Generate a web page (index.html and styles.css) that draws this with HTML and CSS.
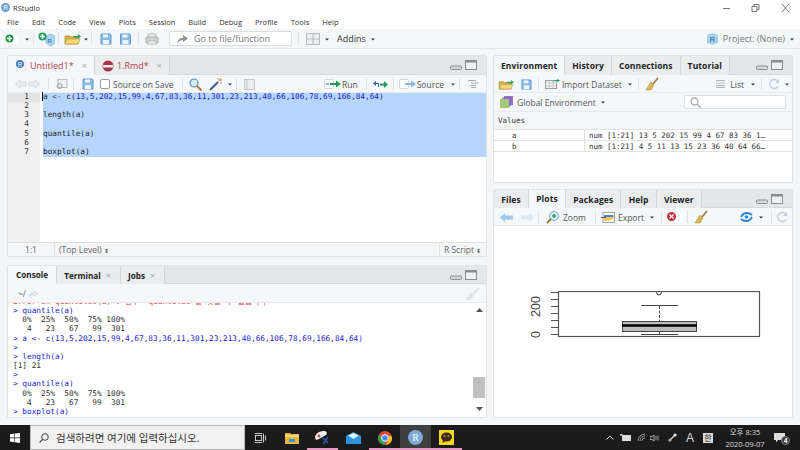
FILE: index.html
```html
<!DOCTYPE html>
<html lang="en">
  <head>
    <meta charset="UTF-8"/>
    <title>RStudio</title>
    <link rel="stylesheet" href="styles.css">
  </head>
  <body>
    <svg class="defs" width="0" height="0">
      <defs>
        <symbol id="floppy" viewBox="0 0 12 12"><path d="M1 1h9l1 1v9H1z" fill="#8bbbe6" stroke="#5f9bd0"/><rect x="3" y="1.500" width="5" height="3" fill="#eef5fb"/><rect x="3" y="7" width="6" height="4" fill="#eef5fb"/></symbol>
        <symbol id="folder" viewBox="0 0 18 12"><path d="M1 3h5l1 1h7v7H1z" fill="#dcb44c" stroke="#a8842c" stroke-width=".7"/><path d="M1 11l2-5h13l-2 5z" fill="#f3d67e" stroke="#b8923a" stroke-width=".6"/><path d="M9 3h5V1l3 2.500L14 6V4.500H10z" fill="#2aa05a"/></symbol>
        <symbol id="broom" viewBox="0 0 14 14"><path d="M13 1L8 7" stroke="#a8742c" stroke-width="1.600"/><path d="M6 5l3 3-3 5-5 0z" fill="#dcb45c" stroke="#a8842c" stroke-width=".5"/></symbol>
        <symbol id="refresh" viewBox="0 0 12 12"><path d="M10 3.500A4.500 4.500 0 1 0 10 8.500" fill="none" stroke="#c3cede" stroke-width="1.400"/><path d="M7 5h4V1z" fill="#c3cede"/></symbol>
        <symbol id="winmin" viewBox="0 0 28 10"><rect x=".5" y="6" width="11" height="3.500" rx="1" fill="#d6d8da" stroke="#8a8d90"/><rect x="15.500" y=".5" width="11" height="9" fill="#eef0f1" stroke="#8a8d90"/><rect x="15.500" y=".5" width="11" height="2" fill="#8a8d90"/></symbol>
        <symbol id="caret" viewBox="0 0 6 4"><path d="M0 .5h6L3 3.500z" fill="#333"/></symbol>
      </defs>
    </svg>

    <div class="app">
      <div class="titleBar">
        <svg class="rLogo" width="9" height="9" viewBox="0 0 9 9"><circle cx="4.500" cy="4.500" r="4.500" fill="#6d9ed3"/><text x="4.500" y="7" text-anchor="middle" font-size="6.500" fill="#fff" font-family="Liberation Sans">R</text></svg>
        <span class="titleBar_text">RStudio</span>
        <span class="spacer"></span>
        <svg class="winButtons" width="67" height="10" viewBox="0 0 67 10"><path d="M0 5.500h7" stroke="#777"/><path d="M29 3.500h5v5h-5zM31 3.500V1.500h5v5h-2" fill="none" stroke="#777"/><path d="M59 1l7 8M66 1l-7 8" stroke="#777"/></svg>
      </div>

      <div class="menuBar">
        <span>File</span><span>Edit</span><span>Code</span><span>View</span><span>Plots</span><span>Session</span><span>Build</span><span>Debug</span><span>Profile</span><span>Tools</span><span>Help</span>
      </div>

      <div class="mainToolbar">
        <svg width="14" height="10" viewBox="0 0 14 10"><rect x="5" y="1" width="8" height="9" fill="#fff"/><circle cx="4.500" cy="4.500" r="4" fill="#1f9d55"/><path d="M4.500 2v5M2 4.500h5" stroke="#fff" stroke-width="1.500"/></svg>
        <svg class="caretIcon ml6" width="4" height="3"><use href="#caret"/></svg>
        <i class="sep ml4"></i>
        <svg class="ml4" width="17" height="14" viewBox="0 0 17 14"><path d="M8 4l5-2 4 2v7l-4 3-5-3z" fill="#a9d4ec" stroke="#6fa8cc" stroke-width=".6"/><circle cx="4.500" cy="4.500" r="4" fill="#1f9d55"/><path d="M4.500 2v5M2 4.500h5" stroke="#fff" stroke-width="1.500"/><text x="9.500" y="11" font-size="6" fill="#2a62a8" font-family="Liberation Sans">R</text></svg>
        <i class="sep ml3"></i>
        <svg class="ml5" width="18" height="12"><use href="#folder"/></svg>
        <svg class="caretIcon ml2" width="4" height="3"><use href="#caret"/></svg>
        <i class="sep ml3"></i>
        <svg class="ml8" width="12" height="12"><use href="#floppy"/></svg>
        <svg class="ml7" width="13" height="12"><use href="#floppy"/></svg>
        <i class="sep ml6"></i>
        <svg class="ml6" width="14" height="12" viewBox="0 0 14 12"><rect x="3" y="1" width="8" height="4" fill="#eee" stroke="#b5b5b5"/><rect x="1" y="4" width="12" height="6" rx="1" fill="#d4d4d4" stroke="#aaa"/><rect x="3" y="8" width="8" height="3" fill="#f4f4f4" stroke="#bbb"/></svg>
        <div class="goToFile ml10">
          <svg width="11" height="9" viewBox="0 0 11 9"><path d="M0 9c1-4 3-5 6-5V1l5 3.500L6 8V6C4 6 2 7 0 9z" fill="#8b9198"/></svg>
          <span>Go to file/function</span>
        </div>
        <i class="sep ml6"></i>
        <svg class="ml7" width="14" height="12" viewBox="0 0 14 12"><rect x=".5" y=".5" width="13" height="11" fill="#eceef0" stroke="#b8bcc0"/><path d="M.5 6h13M7 .5v11" stroke="#b8bcc0"/></svg>
        <svg class="caretIcon ml5" width="4" height="3"><use href="#caret"/></svg>
        <span class="addins ml8">Addins</span>
        <svg class="caretIcon ml5" width="4" height="3"><use href="#caret"/></svg>
        <span class="spacer"></span>
        <svg width="13" height="12" viewBox="0 0 13 12"><path d="M1 2l5.500-2L12 2v8l-5.500 2L1 10z" fill="#a5d3ec"/><text x="6.500" y="9" text-anchor="middle" font-size="7.500" fill="#2a62a8" font-family="Liberation Sans">R</text></svg>
        <span class="project ml4">Project: (None)</span>
        <svg class="caretIcon ml5" width="4" height="3"><use href="#caret"/></svg>
      </div>

      <div class="workspace">
        <div class="column">
          <section class="pane sourcePane">
            <div class="tabBar">
              <div class="tab tab_active tab_source">
                <svg width="12" height="12" viewBox="0 0 12 12"><path d="M2 0h8v12H2z" fill="#fff" stroke="#c8ccd0" stroke-width=".5"/><circle cx="5" cy="5" r="4" fill="#4a78b8"/><text x="5" y="7.500" text-anchor="middle" font-size="6.500" fill="#fff" font-family="Liberation Sans">R</text></svg>
                <span class="unsaved">Untitled1*</span><span class="tabClose">×</span>
              </div>
              <div class="tab tab_source">
                <svg width="12" height="12" viewBox="0 0 12 12"><circle cx="6" cy="6" r="5.500" fill="#a8324a"/><rect x="1" y="5" width="10" height="2.500" fill="#eee"/></svg>
                <span class="unsaved">1.Rmd*</span><span class="tabClose">×</span>
              </div>
              <span class="spacer"></span>
              <svg class="paneButtons" width="28" height="10"><use href="#winmin"/></svg>
            </div>
            <div class="toolbar toolbar_source">
              <svg class="ml7" width="25" height="10" viewBox="0 0 25 10"><path d="M5 1v2h6v4H5v2L.5 5zM20 1v2h-6v4h6v2l4.500-4z" fill="#eceef0" stroke="#c8ccd0" stroke-width=".7"/></svg>
              <i class="sep ml8"></i>
              <svg class="ml6" width="13" height="11" viewBox="0 0 13 11"><rect x="3" y=".5" width="9" height="8" fill="#eef1f3" stroke="#b8bcc0"/><circle cx="4.500" cy="7" r="2.500" fill="none" stroke="#999"/></svg>
              <i class="sep ml5"></i>
              <svg class="ml8" width="12" height="12"><use href="#floppy"/></svg>
              <span class="checkBox ml6"></span>
              <span class="toolLabel ml3">Source on Save</span>
              <i class="sep ml9"></i>
              <svg class="ml6" width="13" height="13" viewBox="0 0 13 13"><circle cx="5" cy="5" r="4" fill="#d8ecf8" stroke="#5a8cb8" stroke-width="1.200"/><path d="M8 8l4.500 4.500" stroke="#b08030" stroke-width="2"/></svg>
              <svg class="ml7" width="14" height="14" viewBox="0 0 14 14"><path d="M1 13l8-8" stroke="#3d5f88" stroke-width="2"/><path d="M11 1v3M9 3h4M13 6h-2M8 1l1 1" stroke="#e08a3c"/></svg>
              <svg class="caretIcon ml5" width="4" height="3"><use href="#caret"/></svg>
              <i class="sep ml4"></i>
              <svg class="ml7" width="11" height="11" viewBox="0 0 11 11"><rect x=".5" y=".5" width="10" height="10" fill="#eceef0" stroke="#c4c8cc"/><path d="M3 .5v10" stroke="#c4c8cc"/></svg>
              <span class="spacer"></span>
              <svg width="17" height="10" viewBox="0 0 17 10"><rect x=".5" y=".5" width="9" height="9" rx="1" fill="#fff" stroke="#d4d8dc"/><path d="M2 5h3" stroke="#8ab8e0" stroke-width="2"/><path d="M6 4h6V1.500L17 5l-5 3.500V6H6z" fill="#1f9d55"/></svg>
              <span class="toolLabel ml1">Run</span>
              <i class="sep ml8"></i>
              <svg class="ml6" width="15" height="9" viewBox="0 0 15 9"><rect width="7" height="9" fill="#fff"/><path d="M5 3H3V1L0 3.500 3 6V4h2v3h1V3z" fill="#2a62a8"/><path d="M7 3.500h4V1l4 3.500L11 8V5.500H7z" fill="#1f9d55"/></svg>
              <i class="sep ml5"></i>
              <svg class="ml5" width="17" height="10" viewBox="0 0 17 10"><rect x=".5" y=".5" width="9" height="9" rx="1" fill="#fff" stroke="#d4d8dc"/><path d="M6 4h6V1.500L17 5l-5 3.500V6H6z" fill="#82b6e4"/></svg>
              <span class="toolLabel ml1">Source</span>
              <svg class="caretIcon ml7" width="4" height="3"><use href="#caret"/></svg>
              <i class="sep ml4"></i>
              <svg class="ml8" width="10" height="8" viewBox="0 0 10 8"><path d="M0 .5h8M3 3h7M2 5.500h6M3 7.500h5" stroke="#a8acb0"/></svg>
            </div>
            <div class="editor">
              <div class="gutter">
                <span class="gutter_active">1</span><span>2</span><span>3</span><span>4</span><span>5</span><span>6</span><span>7</span>
              </div>
              <div class="code">
                <div class="selection">
                  <p><b class="cursor">a</b> <em>&lt;-</em> c(<u>13,5,202,15,99,4,67,83,36,11,301,23,213,40,66,106,78,69,166,84,64</u>)</p>
                  <p>&nbsp;</p>
                  <p>length(a)</p>
                  <p>&nbsp;</p>
                  <p>quantile(a)</p>
                  <p>&nbsp;</p>
                  <p>boxplot(a)</p>
                </div>
              </div>
            </div>
            <div class="statusBar">
              <span class="status_pos">1:1</span>
              <span class="status_scope">(Top Level) <small>⬍</small></span>
              <span class="status_type">R Script <small>⬍</small></span>
            </div>
          </section>

          <section class="pane consolePane">
            <div class="tabBar tabBar_short">
              <div class="tab tab_active tab_strong">Console</div>
              <div class="tab tab_strong">Terminal<span class="tabClose">×</span></div>
              <div class="tab tab_strong">Jobs<span class="tabClose">×</span></div>
              <span class="spacer"></span>
              <svg class="paneButtons" width="28" height="10"><use href="#winmin"/></svg>
            </div>
            <div class="toolbar consoleBar">
              <span class="consolePath">~/</span>
              <svg class="ml3" width="9" height="7" viewBox="0 0 9 7"><path d="M0 7c0-3 2-4 5-4V1l4 2.500L5 6V4.500C3 4.500 1 5 0 7z" fill="none" stroke="#c4ccd4" stroke-width=".8"/></svg>
              <span class="spacer"></span>
              <svg width="16" height="14" viewBox="0 0 16 14"><path d="M15 1L9 7" stroke="#d8dcdc" stroke-width="1.500"/><path d="M7 5l3 3-3 5H1z" fill="#e2e4e4"/></svg>
            </div>
            <div class="consoleBody">
              <div class="consoleLines">
                <p class="consoleError">Error in quantiles(a) : 함수 "quantiles"를 찾을 수 없습니다</p>
                <p><em>&gt; quantile(a)</em></p>
                <p>&nbsp;&nbsp;0%&nbsp;&nbsp;25%&nbsp;&nbsp;50%&nbsp;&nbsp;75% 100%</p>
                <p>&nbsp;&nbsp;&nbsp;4&nbsp;&nbsp;&nbsp;23&nbsp;&nbsp;&nbsp;67&nbsp;&nbsp;&nbsp;99&nbsp;&nbsp;301</p>
                <p><em>&gt; a &lt;- c(13,5,202,15,99,4,67,83,36,11,301,23,213,40,66,106,78,69,166,84,64)</em></p>
                <p><em>&gt;</em></p>
                <p><em>&gt; length(a)</em></p>
                <p>[1] 21</p>
                <p><em>&gt;</em></p>
                <p><em>&gt; quantile(a)</em></p>
                <p>&nbsp;&nbsp;0%&nbsp;&nbsp;25%&nbsp;&nbsp;50%&nbsp;&nbsp;75% 100%</p>
                <p>&nbsp;&nbsp;&nbsp;4&nbsp;&nbsp;&nbsp;23&nbsp;&nbsp;&nbsp;67&nbsp;&nbsp;&nbsp;99&nbsp;&nbsp;301</p>
                <p><em>&gt; boxplot(a)</em></p>
                <p><em>&gt; boxplot(a)</em></p>
              </div>
              <div class="scrollBar">
                <svg width="7" height="4" viewBox="0 0 7 4"><path d="M3.500 0L7 4H0z" fill="#555"/></svg>
                <div class="scrollBar_track"><div class="scrollBar_thumb"></div></div>
                <svg width="7" height="4" viewBox="0 0 7 4"><path d="M0 0h7L3.500 4z" fill="#555"/></svg>
              </div>
            </div>
          </section>
        </div>

        <div class="column">
          <section class="pane envPane">
            <div class="tabBar">
              <div class="tab tab_active tab_strong">Environment</div>
              <div class="tab tab_strong">History</div>
              <div class="tab tab_strong">Connections</div>
              <div class="tab tab_strong">Tutorial</div>
              <span class="spacer"></span>
              <svg class="paneButtons" width="28" height="10"><use href="#winmin"/></svg>
            </div>
            <div class="toolbar toolbar_right3">
              <svg class="ml4" width="17" height="11"><use href="#folder"/></svg>
              <svg class="ml6" width="11" height="11"><use href="#floppy"/></svg>
              <i class="sep ml6"></i>
              <svg class="ml6" width="15" height="10" viewBox="0 0 15 10"><rect x=".5" y="1.500" width="11" height="8" fill="#f4f4f4" stroke="#9aa0a6"/><path d="M.5 4h11M.5 7h11M4 1.500v8M8 1.500v8" stroke="#b4b8bc" stroke-width=".6"/><path d="M7 3l3-2h2V0l3 1.500L12 3V2h-2z" fill="#1f9d55"/></svg>
              <span class="toolLabel ml2">Import Dataset</span>
              <svg class="caretIcon ml6" width="4" height="3"><use href="#caret"/></svg>
              <i class="sep ml6"></i>
              <svg class="ml6" width="14" height="14"><use href="#broom"/></svg>
              <span class="spacer"></span>
              <svg width="9" height="8" viewBox="0 0 9 8"><path d="M0 .5h9M0 3h9M0 5.500h9M0 7.500h9" stroke="#b0b4b8"/></svg>
              <span class="toolLabel ml5">List</span>
              <svg class="caretIcon ml7" width="4" height="3"><use href="#caret"/></svg>
              <i class="sep ml6"></i>
              <svg class="ml6" width="12" height="12"><use href="#refresh"/></svg>
              <svg class="caretIcon ml5" width="4" height="3"><use href="#caret"/></svg>
            </div>
            <div class="toolbar envScope">
              <svg class="ml6" width="13" height="12" viewBox="0 0 13 12"><rect x="4" y="0" width="9" height="9" fill="#a868c8"/><rect x="2" y="1.500" width="9" height="9" fill="#6878c8" opacity=".8"/><rect x="0" y="3" width="9" height="9" fill="#a8c878"/></svg>
              <span class="toolLabel ml4">Global Environment</span>
              <svg class="caretIcon ml5" width="4" height="3"><use href="#caret"/></svg>
              <span class="spacer"></span>
              <div class="searchBox">
                <svg width="11" height="11" viewBox="0 0 11 11"><circle cx="4.500" cy="4.500" r="3.500" fill="none" stroke="#a8acb0" stroke-width="1.300"/><path d="M7 7l3.500 3.500" stroke="#a8acb0" stroke-width="1.500"/></svg>
              </div>
            </div>
            <div class="envBody">
              <div class="envHeading">Values</div>
              <div class="envRow"><span>a</span><span>num [1:21] 13 5 202 15 99 4 67 83 36 1…</span></div>
              <div class="envRow"><span>b</span><span>num [1:21] 4 5 11 13 15 23 36 40 64 66…</span></div>
            </div>
          </section>

          <section class="pane plotPane">
            <div class="tabBar tabBar_short">
              <div class="tab tab_strong">Files</div>
              <div class="tab tab_active tab_strong">Plots</div>
              <div class="tab tab_strong">Packages</div>
              <div class="tab tab_strong">Help</div>
              <div class="tab tab_strong">Viewer</div>
              <span class="spacer"></span>
              <svg class="paneButtons" width="28" height="10"><use href="#winmin"/></svg>
            </div>
            <div class="toolbar toolbar_right4">
              <svg class="ml6" width="13" height="9" viewBox="0 0 13 9"><path d="M5 0v2.500h8v4H5V9L0 4.500z" fill="#9cc8ec"/></svg>
              <svg class="ml8" width="13" height="9" viewBox="0 0 13 9"><path d="M8 0v2.500H0v4h8V9l5-4.500z" fill="#d8e8f4"/></svg>
              <i class="sep ml4"></i>
              <svg class="ml7" width="13" height="13" viewBox="0 0 13 13"><circle cx="8" cy="5" r="4.500" fill="#d8ecf8" stroke="#7ca4c4"/><path d="M8 3v4M6 5h4" stroke="#1f9d55" stroke-width="1.300"/><path d="M5 8l-4 4" stroke="#a87830" stroke-width="2"/></svg>
              <span class="toolLabel ml4">Zoom</span>
              <i class="sep ml9"></i>
              <svg class="ml5" width="14" height="11" viewBox="0 0 14 11"><rect x="2" y=".5" width="11.500" height="10" fill="#fff" stroke="#9aa0a6"/><path d="M3 3h10v3L8 9H3z" fill="#f0c860"/><path d="M3 3h9v2H3z" fill="#4a80c8"/><path d="M0 5.500h5" stroke="#555"/></svg>
              <span class="toolLabel ml3">Export</span>
              <svg class="caretIcon ml6" width="4" height="3"><use href="#caret"/></svg>
              <i class="sep ml7"></i>
              <svg class="ml5" width="15" height="11" viewBox="0 0 15 11"><rect x="5" y="1" width="10" height="10" fill="#fff"/><circle cx="4.500" cy="4.500" r="4.500" fill="#c8313a"/><path d="M2.500 2.500l4 4M6.500 2.500l-4 4" stroke="#fff" stroke-width="1.300"/></svg>
              <i class="sep ml5"></i>
              <svg class="ml6" width="14" height="14"><use href="#broom"/></svg>
              <span class="spacer"></span>
              <svg width="13" height="10" viewBox="0 0 13 10"><path d="M1 5c1.500-3 3-4 5.500-4S11 2 12 3M12 5c-1.500 3-3 4-5.500 4S2 8 1 7" fill="none" stroke="#2a86d4" stroke-width="1.800"/><circle cx="6.500" cy="5" r="1.800" fill="#2a86d4"/></svg>
              <svg class="caretIcon ml6" width="4" height="3"><use href="#caret"/></svg>
              <i class="sep ml8"></i>
              <svg class="ml4" width="12" height="12"><use href="#refresh"/></svg>
            </div>
            <div class="plotArea">
              <svg class="boxplot" width="236" height="55" viewBox="-6 0 236 55">
                <g fill="none" stroke="#555">
                  <rect x="24.500" y="0.500" width="201" height="45" stroke-width="1.200"/>
                  <path d="M24 1.500h-7M24 8.500h-7M24 15.500h-7M24 22.500h-7M24 29.500h-7M24 36.500h-7M24 43.500h-7"/>
                </g>
                <g fill="none" stroke="#444">
                  <path d="M122.500 1a2.500 3 0 0 0 5 0" stroke-width="1"/>
                  <path d="M107 14.500h37M107 43.500h37"/>
                  <path d="M125.500 15v15M125.500 40v3" stroke-dasharray="3 1.500"/>
                </g>
                <rect x="88.500" y="30.500" width="74" height="10" fill="#bcbcbc" stroke="#444"/>
                <path d="M88 34.500h75" stroke="#000" stroke-width="2.600"/>
                <text class="axisText" transform="translate(6 43.500) rotate(-90)" text-anchor="middle">0</text>
                <text class="axisText" transform="translate(6 15.500) rotate(-90)" text-anchor="middle">200</text>
              </svg>
            </div>
          </section>
        </div>
      </div>

      <div class="taskbar">
        <svg class="startLogo" width="10" height="10" viewBox="0 0 10 10"><path d="M0 1.200l4.400-.7v4H0zM5 .4L10 0v4.500H5zM0 5.200h4.400v4L0 8.600zM5 5.200h5V10l-5-.7z" fill="#fff"/></svg>
        <div class="taskSearch">
          <svg width="10" height="10" viewBox="0 0 10 10"><circle cx="6" cy="4" r="3.300" fill="none" stroke="#444"/><path d="M3.500 6.500L.5 9.500" stroke="#444" stroke-width="1.100"/></svg>
          <span>검색하려면 여기에 입력하십시오.</span>
        </div>
        <div class="taskIcons">
          <div class="taskItem">
            <svg width="11" height="10" viewBox="0 0 11 10"><path d="M0 .5h7M0 9.500h7" stroke="#ccc"/><rect x=".5" y="2.500" width="6" height="5" fill="none" stroke="#ccc"/><path d="M8.500 .5v9M10.500 2.500v5" stroke="#ccc"/></svg>
          </div>
          <div class="taskItem">
            <svg width="14" height="12" viewBox="0 0 14 12"><path d="M0 1h5l1 1h8v10H0z" fill="#e8b93e"/><rect x="0" y="3" width="14" height="2" fill="#f6d976"/><rect x="4" y="7" width="6" height="3" fill="#3a8fd8"/></svg>
          </div>
          <div class="taskItem taskItem_running">
            <svg width="15" height="14" viewBox="0 0 15 14"><path d="M0 6C1 2 5 0 9 0c2 0 4 2 2 4L4 8 1 9z" fill="#eee"/><circle cx="4" cy="5" r="1.500" fill="#c8404a"/><path d="M8 7l5 5M13 6l-5 7" stroke="#2a62b8" stroke-width="1.300"/></svg>
          </div>
          <div class="taskItem">
            <svg width="15" height="12" viewBox="0 0 15 12"><path d="M0 4l7.500-4L15 4v8H0z" fill="#2a94dc"/><path d="M2 3.500L7.500 1 13 3.500 7.500 7z" fill="#dff1fb"/></svg>
          </div>
          <div class="taskItem taskItem_running">
            <svg width="14" height="14" viewBox="0 0 14 14"><circle cx="7" cy="7" r="7" fill="#de4b3c"/><path d="M7 14A7 7 0 0 1 1 3.500L5 9l3 5z" fill="#2ea44f"/><path d="M14 7a7 7 0 0 1-6 7l3-6-1-3h3.500z" fill="#f5c41f"/><circle cx="7" cy="7" r="3.300" fill="#4285f4" stroke="#fff"/></svg>
          </div>
          <div class="taskItem taskItem_running taskItem_active">
            <svg width="15" height="15" viewBox="0 0 15 15"><circle cx="7.500" cy="7.500" r="7.500" fill="#7da9d8"/><text x="7.500" y="11" text-anchor="middle" font-size="10" fill="#fff" font-family="Liberation Serif">R</text></svg>
          </div>
          <div class="taskItem taskItem_running">
            <svg width="15" height="15" viewBox="0 0 15 15"><rect width="15" height="15" fill="#f7d71e"/><ellipse cx="7.500" cy="7" rx="5.500" ry="4.500" fill="#3c2a1e"/><path d="M4 10l-.5 3 3-2z" fill="#3c2a1e"/><path d="M4.500 6h2M8.500 6h2" stroke="#f7d71e"/></svg>
          </div>
        </div>
        <span class="spacer"></span>
        <div class="tray">
          <svg width="8" height="5" viewBox="0 0 8 5"><path d="M.5 4.500L4 1l3.500 3.500" fill="none" stroke="#ddd"/></svg>
          <svg class="ml6" width="11" height="7" viewBox="0 0 11 7"><rect x="2" y="1" width="9" height="6" fill="#ddd"/><rect width="3" height="2" fill="#aaa"/></svg>
          <svg class="ml6" width="9" height="9" viewBox="0 0 9 9"><path d="M1 8a7 7 0 0 1 7-7M3 8a5 5 0 0 1 5-5M5 8a3 3 0 0 1 3-3" fill="none" stroke="#999"/></svg>
          <svg class="ml4" width="9" height="8" viewBox="0 0 9 8"><path d="M0 2.500h2L4 1v6L2 5.500H0z" fill="none" stroke="#ccc" stroke-width=".8"/><path d="M6 2v4M8 1.500v5" stroke="#999"/></svg>
          <svg class="ml9" width="9" height="9" viewBox="0 0 9 9"><path d="M1 8l7-7" stroke="#ccc" stroke-width="1.500"/><circle cx="2" cy="7" r="1.600" fill="#aaa"/><circle cx="7" cy="2" r="1.600" fill="#ddd"/></svg>
          <span class="trayA ml9">A</span>
          <span class="trayIme ml9">한</span>
          <div class="clock ml9"><span>오후 8:35</span><span>2020-09-07</span></div>
          <div class="notify ml6">
            <svg width="11" height="10" viewBox="0 0 11 10"><path d="M0 0h11v7H4L2 9.500V7H0z" fill="#ddd"/></svg>
            <span class="notifyBadge">4</span>
          </div>
        </div>
      </div>
    </div>
  </body>
</html>
```
FILE: styles.css
```css
* {
  box-sizing: border-box;
}
html, body {
  margin: 0;
  padding: 0;
}
body {
  width: 800px;
  height: 450px;
  overflow: hidden;
  font-family: "Open Sans", "Noto Sans CJK KR", sans-serif;
  font-size: 9px;
  color: #444;
  background-color: #fff;
}
p {
  margin: 0;
}
svg {
  display: block;
  flex: none;
}
.defs {
  position: absolute;
}
.spacer {
  flex: 1;
}
.ml1 { margin-left: 1px; }
.ml2 { margin-left: 2px; }
.ml3 { margin-left: 3px; }
.ml4 { margin-left: 4px; }
.ml5 { margin-left: 5px; }
.ml6 { margin-left: 6px; }
.ml7 { margin-left: 7px; }
.ml8 { margin-left: 8px; }
.ml9 { margin-left: 9px; }
.ml10 { margin-left: 10px; }
.app {
  display: flex;
  flex-direction: column;
  height: 450px;
}

/* title + menu */
.titleBar {
  display: flex;
  align-items: center;
  height: 15px;
  padding: 0 10px 0 1px;
}
.titleBar_text {
  margin-left: 3px;
  font-size: 7.5px;
  color: #333;
}
.menuBar {
  display: flex;
  align-items: center;
  height: 14px;
  padding-left: 7px;
  color: #333;
  font-size: 7.5px;
}
.menuBar span {
  margin-right: 13px;
}

/* main toolbar */
.mainToolbar {
  display: flex;
  align-items: center;
  height: 20px;
  padding: 0 6px 0 5px;
  background-color: #f4f7f8;
  border-bottom: 1px solid #e4e6e8;
}
.sep {
  flex: none;
  width: 1px;
  height: 12px;
  background-color: #dfe2e5;
}
.caretIcon {
  margin-top: 1px;
}
.goToFile {
  display: flex;
  align-items: center;
  gap: 6px;
  width: 123px;
  height: 15px;
  padding-left: 7px;
  background-color: #fff;
  border: 1px solid #dcdfe2;
  border-radius: 2px;
  font-size: 9px;
  color: #777;
}
.addins {
  font-size: 9px;
  color: #333;
}
.project {
  font-size: 9px;
  color: #777;
}

/* panes */
.workspace {
  display: grid;
  grid-template-columns: 480px 300px;
  gap: 6px;
  flex: 1;
  min-height: 0;
  padding: 6px 7px 7px;
  background-color: #f4f6f8;
}
.column {
  display: flex;
  flex-direction: column;
  gap: 8px;
  min-height: 0;
}
.pane {
  display: flex;
  flex-direction: column;
  min-height: 0;
  overflow: hidden;
  background-color: #fff;
  border: 1px solid #e0e2e4;
  border-radius: 2px 2px 0 0;
}
.sourcePane {
  height: 202px;
}
.consolePane {
  flex: 1;
}
.envPane {
  height: 128px;
  margin-bottom: -2px;
}
.plotPane {
  flex: 1;
}
.tabBar {
  display: flex;
  flex: none;
  height: 19px;
  background-color: #e4e6e8;
  border-bottom: 1px solid #d8dadc;
}
.tabBar_short {
  height: 18px;
}
.tab {
  display: flex;
  align-items: center;
  padding: 0 7px;
  font-size: 8.5px;
  font-weight: 600;
  color: #222;
  background-color: #eaecee;
  border-right: 1px solid #d4d6d8;
  margin-bottom: -1px;
}
.tab_strong {
  font-weight: 700;
  letter-spacing: .1px;
}
.tab_active {
  background-color: #f4f8fa;
  border-bottom: 1px solid #f4f8fa;
}
.tab_source {
  gap: 3px;
  font-weight: 400;
}
.consolePane .tab {
  padding: 0 7px;
  font-size: 8.2px;
  letter-spacing: 0;
}
.consolePane .tab_active {
  padding: 0 8px;
}
.consolePane .tabClose {
  margin-right: 2px;
}
.plotPane .tab {
  padding: 0 7.2px;
}
.unsaved {
  color: #b8404a;
  font-size: 9px;
}
.tabClose {
  margin-left: 5px;
  font-size: 9px;
  font-weight: 400;
  color: #aaa;
}
.paneButtons {
  align-self: center;
  margin-right: 8px;
}
.toolbar {
  display: flex;
  flex: none;
  align-items: center;
  height: 18px;
  padding-top: 1px;
  background-color: #f4f8fa;
  border-bottom: 1px solid #e8eaec;
}
.toolbar_source {
  padding-right: 8px;
}
.toolbar_right3 {
  padding-right: 3px;
}
.toolbar_right4 {
  padding-right: 4px;
}
.toolLabel {
  font-size: 8.5px;
  color: #555;
}
.checkBox {
  flex: none;
  width: 10px;
  height: 10px;
  background-color: #fff;
  border: 1px solid #999;
  border-radius: 2px;
}

/* editor */
.editor {
  display: flex;
  flex: 1;
  min-height: 0;
  font-family: "DejaVu Sans Mono", monospace;
  font-size: 7.75px;
}
.gutter {
  display: flex;
  flex-direction: column;
  width: 32px;
  background-color: #f0f0f0;
  color: #333;
}
.gutter span {
  display: block;
  height: 9.15px;
  padding-right: 11px;
  line-height: 7.5px;
  text-align: right;
}
.gutter .gutter_active {
  background-color: #e4e4e4;
}
.code {
  flex: 1;
  padding-left: 3px;
}
.selection {
  background-color: #b5d5ff;
  color: #222;
}
.selection p {
  height: 9.15px;
  line-height: 7.5px;
}
.selection em {
  font-style: normal;
  color: #555;
}
.selection u {
  text-decoration: none;
  color: #1c1ccc;
}
.cursor {
  font-weight: 400;
  box-shadow: -1px 0 0 #000;
}
.statusBar {
  display: flex;
  flex: none;
  height: 14px;
  align-items: stretch;
  background-color: #f4f6f8;
  border-top: 1px solid #dfe1e3;
  font-size: 8.5px;
  color: #666;
  line-height: 13px;
}
.status_pos {
  width: 47px;
  text-align: center;
  border-right: 1px solid #dfe1e3;
}
.status_scope {
  flex: 1;
  padding-left: 4px;
}
.status_type {
  width: 47px;
  padding-left: 4px;
  border-left: 1px solid #dfe1e3;
}
.status_scope small, .status_type small {
  font-size: 6px;
}

/* console */
.consoleBar {
  height: 19px;
  padding-left: 10px;
  padding-right: 6px;
}
.consolePath {
  font-size: 8.5px;
  color: #666;
}
.consoleBody {
  display: flex;
  flex: 1;
  min-height: 0;
  overflow: hidden;
}
.consoleLines {
  flex: 1;
  padding-left: 5px;
  margin-top: -6px;
  font-family: "DejaVu Sans Mono", "Noto Sans CJK KR", monospace;
  font-size: 7.75px;
  line-height: 9.15px;
  color: #333;
}
.consoleLines em {
  font-style: normal;
  color: #2222dd;
}
.consoleError {
  color: #d84040;
}
.scrollBar {
  display: flex;
  flex-direction: column;
  align-items: center;
  flex: none;
  gap: 4px;
  width: 13px;
  padding: 5px 0 6px;
}
.scrollBar_track {
  flex: 1;
  width: 100%;
  position: relative;
}
.scrollBar_thumb {
  position: absolute;
  left: 0;
  right: 1px;
  bottom: 5px;
  height: 21px;
  background-color: #c0c0c0;
}

/* environment */
.envScope {
  height: 19px;
  padding-top: 0;
  padding-right: 6px;
}
.searchBox {
  display: flex;
  align-items: center;
  width: 102px;
  height: 14px;
  padding-left: 5px;
  background-color: #fff;
  border: 1px solid #dcdfe2;
  border-radius: 2px;
}
.envBody {
  flex: 1;
  font-family: "DejaVu Sans Mono", monospace;
  font-size: 7.5px;
  color: #333;
}
.envHeading {
  height: 18px;
  padding-left: 4px;
  line-height: 18px;
  background-color: #f4f6f8;
  border-bottom: 1px solid #e0e2e4;
}
.envRow {
  display: grid;
  grid-template-columns: 91px 1fr;
  height: 11px;
  line-height: 11px;
  border-bottom: 1px solid #dfe1e3;
}
.envRow span:first-child {
  padding-left: 18px;
  border-right: 1px solid #dfe1e3;
}
.envRow span:last-child {
  padding-left: 4px;
}

/* plot */
.plotArea {
  flex: 1;
  padding: 65px 0 0 34px;
}
.axisText {
  font-family: "Liberation Sans", sans-serif;
  font-size: 12.5px;
  fill: #444;
}

/* taskbar */
.taskbar {
  display: flex;
  align-items: stretch;
  flex: none;
  height: 25px;
  background-color: #1b1b1b;
}
.startLogo {
  align-self: center;
  margin: 0 10px;
}
.taskSearch {
  display: flex;
  align-items: center;
  gap: 7px;
  width: 215px;
  padding-left: 8px;
  background-color: #f1f1f1;
  border: 1px solid #bbb;
  font-size: 10.5px;
  color: #333;
}
.taskIcons {
  display: flex;
}
.taskItem {
  display: flex;
  align-items: center;
  justify-content: center;
  width: 31px;
}
.taskItem_running {
  box-shadow: inset 0 -2px 0 #e79ac6;
}
.taskItem_active {
  background-color: #3f3f3f;
}
.tray {
  display: flex;
  align-items: center;
  padding-right: 15px;
  color: #ddd;
}
.trayA {
  font-family: "Liberation Sans", sans-serif;
  font-size: 12px;
}
.trayIme {
  width: 10px;
  height: 10px;
  line-height: 10px;
  text-align: center;
  font-size: 8px;
  color: #111;
  background-color: #ddd;
}
.clock {
  display: flex;
  flex-direction: column;
  align-items: center;
  width: 46px;
  font-size: 7.5px;
  line-height: 12px;
}
.notify {
  position: relative;
}
.notifyBadge {
  position: absolute;
  right: -5px;
  top: 3px;
  width: 9px;
  height: 9px;
  line-height: 8px;
  text-align: center;
  font-size: 6.5px;
  font-weight: 700;
  color: #fff;
  background-color: #333;
  border: 1px solid #888;
  border-radius: 50%;
}
```
